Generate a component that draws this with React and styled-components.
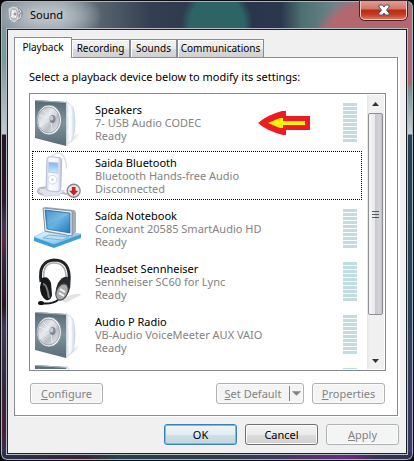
import React from 'react';
import styled, { createGlobalStyle, css } from 'styled-components';

const Global = createGlobalStyle`
  *, *::before, *::after { box-sizing: border-box; }
  body { margin: 0; background: #050608; font: 11px/13px "Noto Sans", "Open Sans", sans-serif; color: #000; }
  button { font: inherit; color: inherit; padding: 0; margin: 0; }
  ul { list-style: none; margin: 0; padding: 0; }
`;

const Window = styled.main`
  display: flex;
  flex-direction: column;
  min-height: 100vh;
  padding: 0 6px 6px;
  border: 1px solid #0b0d10;
  border-radius: 7px;
  box-shadow: inset 0 0 0 1px #a9b4bb;
  background:
    radial-gradient(ellipse 36px 40px at 50% 24px, #2f6466 75%, transparent) 176px 0 / 80px 28px no-repeat,
    radial-gradient(circle at calc(100% - 36px) 58px, #b5676f 0 56px, transparent 70px) 0 0 / 100% 84px no-repeat,
    radial-gradient(ellipse 56px 24px at 46px 15px, #b4bcc2 30%, transparent) 0 0 / 110px 28px no-repeat,
    linear-gradient(90deg, #7d8d94, #8e9aa2 60px, #56636f 100px, #333f50 150px, #29344a 240px, #2b384c 68%, #4d7072 73%, #70868b 82%, #7c8287) 0 0 / 100% 28px no-repeat,
    linear-gradient(90deg, #2b2f4e, #3a2434 20%, #28414a 28%, #2a3e49 50%, #3d3a5e 68%, #6a2a82 83%, #343252 92%) 0 100% / 100% 8px no-repeat,
    linear-gradient(#7d9698, #7a9a9b 60px, #c3cccd 133px, #2a1526 134px, #2f1830 200px, #43355a 224px, #5c2a45 242px, #38253f 260px, #2b1424 305px, #43365a 325px, #35253c 390px, #4b1d3a 430px, #2f3254 450px) 0 0 / 8px 100% no-repeat,
    linear-gradient(#b5676f 80px, #7c9093 88px, #a3adb0 110px, #c9cfd0 133px, #263f50 134px, #24464f 220px, #28405a 300px, #3b3a64 400px);
`;

const TitleBar = styled.header`
  display: flex;
  align-items: flex-start;
  height: 28px;
  h1 { flex: 1; margin: 7px 0 0 6px; font-size: 11px; line-height: 14px; font-weight: 400; text-shadow: 0 0 5px #d6dde2; }
  > svg { margin: 5px 0 0 1px; }
`;

const CloseButton = styled.button`
  display: grid;
  place-items: center;
  width: 47px;
  height: 19px;
  border: 1px solid #efc9c4;
  border-top: 0;
  border-radius: 0 0 5px 5px;
  background: linear-gradient(#dfa096, #cf7466 45%, #b42c16 50%, #c33b22 75%, #de7458);
  box-shadow: 0 0 0 1px #43222a;
`;

const Client = styled.section`
  flex: 1;
  padding: 7px 6px 7px;
  border: 1px solid #1b2129;
  outline: 1px solid #b3bdc3;
  background: #f0f0f0;
`;

const Tabs = styled.div`
  display: flex;
  align-items: flex-end;
  height: 20px;
`;

const Tab = styled.button`
  height: 18px;
  width: ${p => p.$width}px;
  font-size: 10px;
  white-space: nowrap;
  border: 1px solid #898c95;
  border-bottom: 0;
  border-left-width: ${p => (p.$joined ? 0 : 1)}px;
  background: linear-gradient(#f3f3f3, #ebebeb 50%, #dcdcdc 50%, #d0d0d0);
  box-shadow: inset 1px 1px #fff;
  ${p => p.$active && css`
    position: relative;
    height: 21px;
    margin-bottom: -1px;
    padding-bottom: 1px;
    background: #fff;
  `}
`;

const Panel = styled.div`
  display: flex;
  flex-direction: column;
  padding: 12px 11px 11px 14px;
  margin-right: 2px;
  border: 1px solid #898c95;
  background: #fff;
  box-shadow: 2px 1px #fff;
  p { margin: 0 0 9px; line-height: 14px; white-space: nowrap; }
`;

const ListFrame = styled.div`
  display: flex;
  height: 278px;
  border: 1px solid #828790;
  padding: 1px;
`;

const Devices = styled.ul`
  flex: 1;
  min-width: 0;
  display: flex;
  flex-direction: column;
  gap: 4px;
  padding: 3px 5px 0 1px;
  overflow: hidden;
`;

const Device = styled.li`
  flex: none;
  display: flex;
  align-items: center;
  height: 49px;
  padding: 0 4px 0 1px;
  border: 1px ${p => (p.$focused ? 'dotted #000' : 'solid transparent')};
`;

const IconSlot = styled.div`
  display: flex;
  flex: none;
  width: 48px;
`;

const DeviceText = styled.div`
  flex: 1;
  margin-left: 13px;
  color: #838383;
  white-space: nowrap;
  strong { display: block; font-weight: 400; color: #000; }
  span { display: block; }
`;

const Meter = styled.div`
  width: 14px;
  height: 39px;
  background: repeating-linear-gradient(#c1dce2 0 3px, #fff 3px 4px);
`;

const ArrowMark = styled.svg`
  margin-right: 33px;
`;

const ScrollBar = styled.div`
  display: flex;
  flex-direction: column;
  width: 17px;
  background: linear-gradient(90deg, #e6e6e6, #f1f1f1 3px, #f0f0f0);
`;

const ScrollButton = styled.button`
  display: grid;
  place-items: center;
  height: 17px;
  border: 0;
  background: none;
`;

const Track = styled.div`
  flex: 1;
  padding: 1px 1px 0;
`;

const Thumb = styled.div`
  display: grid;
  place-items: center;
  height: 202px;
  border: 1px solid #8e8f94;
  border-radius: 2px;
  background: linear-gradient(90deg, #f6f6f6, #e9e9eb 45%, #c9cacf 50%, #d5d5d9 85%, #bcbdc3);
`;

const Actions = styled.div`
  display: flex;
  gap: 8px;
  margin-top: 12px;
  padding: 0 1px;
`;

const Footer = styled.footer`
  display: flex;
  justify-content: flex-end;
  gap: 8px;
  margin-top: 8px;
  padding-right: 1px;
`;

const Button = styled.button`
  width: 73px;
  height: 21px;
  margin-right: ${p => (p.$first ? 'auto' : 0)};
  border: 1px solid #707070;
  border-radius: 3px;
  background: linear-gradient(#f3f3f3, #ebebeb 50%, #dddddd 50%, #cfcfcf);
  box-shadow: inset 0 0 0 1px #fbfbfb;
  white-space: nowrap;
  &:disabled { color: #838383; border-color: #adb2b5; background: #f4f4f4; }
  ${p => p.$primary && css`
    border-color: #3c7fb1;
    background: linear-gradient(#edf4f7, #e3eef3 50%, #cfe0e8 50%, #c0d6df);
    box-shadow: inset 0 0 0 1px #45d3f8;
  `}
`;

const SplitButton = styled(Button)`
  display: flex;
  align-items: center;
  width: 88px;
  span { flex: 1; }
  svg { width: 14px; height: 15px; border-left: 1px solid #838383; }
`;

const TitleIcon = () => (
  <svg width="16" height="17" viewBox="0 0 16 17" aria-hidden="true">
    <path d="m9 1 5 3 1 4-3 6-4 1Z" fill="#8b8f94" />
    <path d="m11 3 2 3-3 2m3 0-1 4-2 1" stroke="#e8eaec" fill="none" />
    <path d="M1 3 5 1l4 1 1 2v9l-4 3-4-3Z" fill="#c3c6c7" stroke="#e9ebeb" strokeWidth=".8" />
    <ellipse cx="6" cy="8" rx="3.500" ry="5" fill="#e2e4e4" stroke="#8b9193" strokeWidth=".7" />
    <path d="m4 4 2 4-3 3m3-3 2 4" stroke="#fff" fill="none" />
    <circle cx="7" cy="8" r="1.500" fill="#969b9e" />
  </svg>
);

const SpeakerIcon = () => (
  <svg width="46" height="48" viewBox="0 0 46 48" aria-hidden="true">
    <defs>
      <linearGradient id="front" x2="0" y2="1"><stop stopColor="#566a75" /><stop offset=".5" stopColor="#7f929c" /><stop offset="1" stopColor="#596c77" /></linearGradient>
      <linearGradient id="side"><stop stopColor="#cbd8e6" /><stop offset=".4" stopColor="#fafcff" /><stop offset="1" stopColor="#ccd9e8" /></linearGradient>
      <linearGradient id="cone" x2="1" y2="1"><stop stopColor="#a6aeb5" /><stop offset=".4" stopColor="#e7eaed" /><stop offset=".65" stopColor="#b9bfc6" /><stop offset="1" stopColor="#f2f4f6" /></linearGradient>
    </defs>
    <path d="m35 41 9-7-1 5-8 6Z" fill="#ededed" />
    <path d="m32 2 7 6q4 16 0 32l-7 7Z" fill="url(#side)" stroke="#c3ceda" strokeWidth=".6" />
    <path d="m35 7 2 4v26l-2 4M34 14q4 10 0 20" stroke="#fff" fill="none" />
    <path d="m1 1 31 2v44L1 39Z" fill="url(#front)" />
    <path d="m1 1 31 2v1L1 2Z" fill="#aab5bc" />
    <ellipse cx="15" cy="21" rx="12.500" ry="15" fill="#f3f5f6" stroke="#586975" strokeWidth=".6" />
    <ellipse cx="14.500" cy="21" rx="11" ry="13" fill="url(#cone)" stroke="#8d989f" strokeWidth=".8" />
    <path d="m5 16 12 4-12 8m12-8 1 12M9 11l9 9 6-8" stroke="#f3f5f7" strokeWidth=".9" fill="none" opacity=".7" />
    <ellipse cx="18.500" cy="20" rx="3" ry="4" fill="#7f8890" /><ellipse cx="17.500" cy="19" rx="2" ry="2.500" fill="#c4cad0" />
  </svg>
);

const BluetoothIcon = () => (
  <svg width="52" height="48" viewBox="0 0 52 48" aria-hidden="true">
    <defs>
      <linearGradient id="player"><stop stopColor="#c6cbe2" /><stop offset=".25" stopColor="#fff" /><stop offset=".75" stopColor="#f1f2fb" /><stop offset="1" stopColor="#b3b8d5" /></linearGradient>
      <linearGradient id="screen" x2="0" y2="1"><stop stopColor="#7fb4f0" /><stop offset="1" stopColor="#c2f0ff" /></linearGradient>
    </defs>
    <path d="M17 5c4-4 7-6 9-6m0 0q7 0 9 12v5" stroke="#dadde9" fill="none" strokeWidth="1.500" />
    <path d="M15 37C3 35 1 43 10 44s19-5 26 0" stroke="#b9bdca" fill="none" strokeWidth="2.500" />
    <path d="m6 40 7-3 20 3-6 5-15 1Z" fill="#e0e2ec" stroke="#c5c8d5" strokeWidth=".6" />
    <path d="M14 6q0-3 4-3l9 1q3 0 3 4l-1 29q0 4-4 4l-9-1q-3 0-3-4Z" fill="url(#player)" stroke="#b4b9d2" />
    <path d="m16 9 10 1v11l-10-1Z" fill="url(#screen)" stroke="#bbbfd7" strokeWidth=".8" />
    <circle cx="20" cy="28" r="4.800" fill="#fff" stroke="#d0d2dc" /><circle cx="20" cy="28" r="1.500" fill="#d7d9e1" />
    <circle cx="43" cy="40" r="7" fill="#e7e7e9" stroke="#85868d" strokeWidth="1.500" />
    <path d="M41 36h4v4h3l-5 5-5-5h3Z" fill="#ca2027" />
  </svg>
);

const LaptopIcon = () => (
  <svg width="48" height="48" viewBox="0 0 48 48" aria-hidden="true">
    <defs>
      <linearGradient id="display" x2="1" y2="1"><stop stopColor="#2a75b9" /><stop offset=".5" stopColor="#66b4e2" /><stop offset="1" stopColor="#2774b7" /></linearGradient>
      <linearGradient id="base" x2="1" y2="1"><stop stopColor="#effaff" /><stop offset="1" stopColor="#65b9e5" /></linearGradient>
    </defs>
    <path d="m0 32 12-5 35 2v4L20 43 0 36Z" fill="#3b9ed5" />
    <path d="m0 32 12-6 35 3-27 10Z" fill="url(#base)" stroke="#84c5e8" strokeWidth=".7" />
    <path d="m9 33 6-3 20 2-7 3Z" fill="#bbdef0" stroke="#6faccd" strokeWidth=".8" />
    <path d="m9 3 3-1 28 3q2 1 2 3v19l-4 4-27-4Z" fill="#a3adb6" />
    <path d="m9 3 29 3v25l-27-5Z" fill="#edf1f3" stroke="#75828c" strokeWidth=".8" />
    <path d="m11 5 25 3v20l-23-4Z" fill="url(#display)" stroke="#225f98" strokeWidth=".7" />
    <path d="m12 6 23 3-21 11Z" fill="#9fd1ee" opacity=".3" />
  </svg>
);

const HeadsetIcon = () => (
  <svg width="48" height="48" viewBox="0 0 48 48" aria-hidden="true">
    <path d="M26 41q20-8 21-4L31 45Z" fill="#e4e4e4" />
    <path d="M7 24Q4 3 20 2q17 0 15 22" stroke="#202224" strokeWidth="3" fill="none" />
    <path d="M10 22Q8 5 20 5q13 0 12 17" stroke="#a9adb0" strokeWidth="1.500" fill="none" />
    <path d="M8 20q6-3 9 5l1 12q-1 6-6 5-6-4-6-13Z" fill="#171819" />
    <path d="M9 26q4 0 6 14" stroke="#777b7f" strokeWidth="2" fill="none" />
    <path d="M24 25q6-9 11-5 4 9-3 19-4 5-8 3-5-6 0-17Z" fill="#262829" />
    <ellipse cx="28" cy="34" rx="5.500" ry="8.500" transform="rotate(25 28 34)" fill="#a7abad" stroke="#4e5153" />
    <path d="m26 31 5 3m-6 1 5 3" stroke="#f7f8f8" strokeWidth="2" />
    <path d="M24 42q-7 5-18 3" stroke="#161718" strokeWidth="2" fill="none" /><ellipse cx="7" cy="45" rx="3" ry="2" fill="#101112" />
  </svg>
);

const Pointer = () => (
  <ArrowMark width="52" height="24" viewBox="0 0 52 24" role="img" aria-label="Arrow to the selected device">
    <path d="M0 12Q9 4 24 0h4v5h24v14H28v5h-3Q9 20 0 12Z" fill="#ed1c24" />
    <path d="m10 12 12-5h3v3h22v4H25v3h-3Z" fill="#fff200" />
  </ArrowMark>
);

const devices = [
  { name: 'Speakers', driver: '7- USB Audio CODEC', state: 'Ready', Icon: SpeakerIcon, meter: true, marked: true },
  { name: 'Saida Bluetooth', driver: 'Bluetooth Hands-free Audio', state: 'Disconnected', Icon: BluetoothIcon, focused: true },
  { name: 'Saída Notebook', driver: 'Conexant 20585 SmartAudio HD', state: 'Ready', Icon: LaptopIcon, meter: true },
  { name: 'Headset Sennheiser', driver: 'Sennheiser SC60 for Lync', state: 'Ready', Icon: HeadsetIcon, meter: true },
  { name: 'Audio P Radio', driver: 'VB-Audio VoiceMeeter AUX VAIO', state: 'Ready', Icon: SpeakerIcon, meter: true },
  { Icon: SpeakerIcon, meter: true },
];

const tabs = [
  { label: 'Playback', width: 58 },
  { label: 'Recording', width: 58, joined: true },
  { label: 'Sounds', width: 47 },
  { label: 'Communications', width: 87 },
];

export default function App() {
  return (
    <>
      <Global />
      <Window>
        <TitleBar>
          <TitleIcon />
          <h1>Sound</h1>
          <CloseButton aria-label="Close">
            <svg width="12" height="12" viewBox="0 0 12 12" aria-hidden="true">
              <path d="M1 1h3.500L6 3l1.500-2H11v2L8.500 6 11 9v2H7.500L6 9l-1.500 2H1V9l2.500-3L1 3Z" fill="#fff" stroke="#545565" />
            </svg>
          </CloseButton>
        </TitleBar>
        <Client>
          <Tabs role="tablist">
            {tabs.map((t, i) => (
              <Tab key={t.label} role="tab" aria-selected={i === 0} $active={i === 0} $joined={t.joined} $width={t.width}>{t.label}</Tab>
            ))}
          </Tabs>
          <Panel role="tabpanel">
            <p>Select a playback device below to modify its settings:</p>
            <ListFrame>
              <Devices>
                {devices.map(({ name, driver, state, Icon, meter, marked, focused }, i) => (
                  <Device key={i} $focused={focused}>
                    <IconSlot><Icon /></IconSlot>
                    <DeviceText>
                      {name && <><strong>{name}</strong><span>{driver}</span><span>{state}</span></>}
                    </DeviceText>
                    {marked && <Pointer />}
                    {meter && <Meter />}
                  </Device>
                ))}
              </Devices>
              <ScrollBar>
                <ScrollButton aria-label="Scroll up"><svg width="7" height="4" viewBox="0 0 7 4"><path d="M0 4 3.500 0 7 4Z" fill="#333" /></svg></ScrollButton>
                <Track>
                  <Thumb><svg width="7" height="8" viewBox="0 0 7 8"><path d="M0 1.500h7M0 4.500h7M0 7.500h7" stroke="#55575c" /></svg></Thumb>
                </Track>
                <ScrollButton aria-label="Scroll down"><svg width="7" height="4" viewBox="0 0 7 4"><path d="M0 0h7L3.500 4Z" fill="#333" /></svg></ScrollButton>
              </ScrollBar>
            </ListFrame>
            <Actions>
              <Button disabled $first><u>C</u>onfigure</Button>
              <SplitButton disabled>
                <span><u>S</u>et Default</span>
                <svg viewBox="0 0 14 15" aria-hidden="true"><path d="M2 5h10L7 10Z" fill="#838383" /></svg>
              </SplitButton>
              <Button disabled><u>P</u>roperties</Button>
            </Actions>
          </Panel>
          <Footer>
            <Button $primary>OK</Button>
            <Button>Cancel</Button>
            <Button disabled><u>A</u>pply</Button>
          </Footer>
        </Client>
      </Window>
    </>
  );
}
